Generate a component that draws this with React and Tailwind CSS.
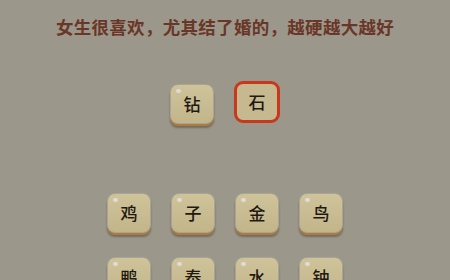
import React from 'react';

const font = { fontFamily: '"Noto Sans CJK SC", "Noto Sans", sans-serif' };

function Tile({ ch, selected = false }) {
  if (selected) {
    return (
      <div className="w-[46px] h-[42px] rounded-[9px] border-[3px] border-[#c8381c] bg-[#c6b990] flex items-center justify-center mt-[-3px]">
        <span className="text-[17px] text-[#1f1910] font-medium">{ch}</span>
      </div>
    );
  }
  return (
    <div className="relative w-[44px] h-[40px] rounded-[8px] border border-[#a9a493] bg-gradient-to-b from-[#cfc39a] to-[#c2b58a] shadow-[0_2px_0_#b07a3e,0_4px_2px_rgba(60,55,45,0.45)] flex items-center justify-center">
      <span className="absolute left-[5px] top-[4px] w-[5px] h-[4px] rounded-full bg-[#e4e2ea] opacity-75" />
      <span className="text-[17px] text-[#1f1910] font-medium">{ch}</span>
    </div>
  );
}

export default function App() {
  const rows = [
    ['鸡', '子', '金', '鸟'],
    ['鸭', '泰', '水', '钟'],
  ];

  return (
    <div className="w-[450px] h-[280px] overflow-hidden bg-[#9b988b] flex flex-col items-center" style={font}>
      {/* Question */}
      <div className="mt-[14px] h-[26px] text-[17.5px] leading-[26px] text-[#6a3628] font-semibold tracking-[0.3px]">
        女生很喜欢，尤其结了婚的，越硬越大越好
      </div>

      {/* Answer slots */}
      <div className="mt-[44px] flex gap-[20px] items-start">
        <Tile ch="钻" />
        <Tile ch="石" selected />
      </div>

      {/* Letter pool */}
      <div className="mt-[69px] grid grid-cols-4 gap-x-[20px] gap-y-[24px]">
        {rows.flat().map((c, i) => (
          <Tile key={i} ch={c} />
        ))}
      </div>
    </div>
  );
}
